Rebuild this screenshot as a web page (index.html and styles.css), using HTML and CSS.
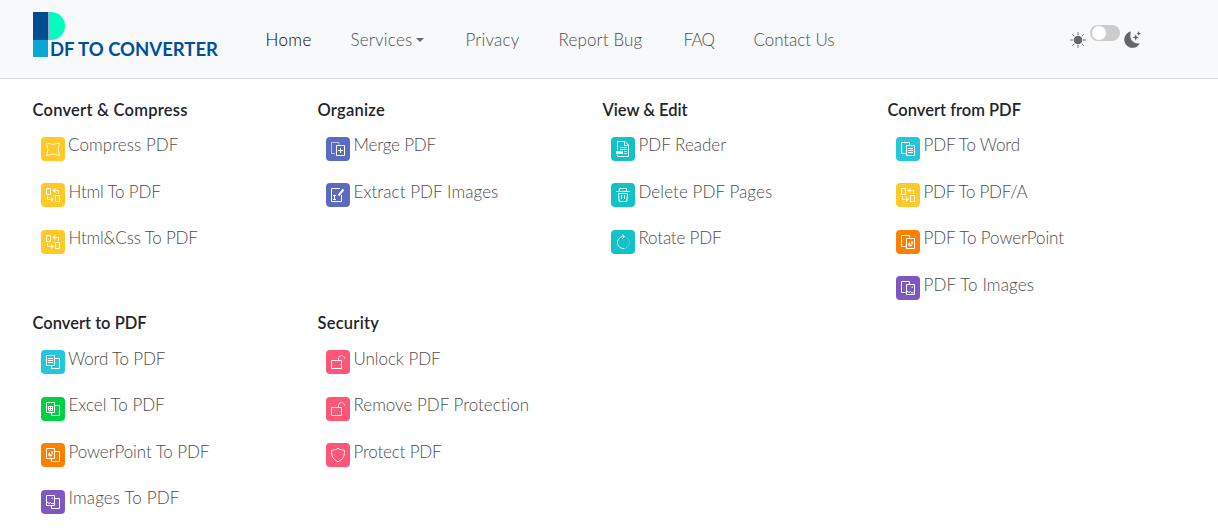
FILE: index.html
```html
<!DOCTYPE html>
<html lang="en">
<head>
<meta charset="utf-8">
<title>PDF To Converter</title>
<link rel="stylesheet" href="styles.css">
</head>
<body>
<svg class="sprite" aria-hidden="true">
  <symbol id="compress" viewBox="0 0 24 24"><path opacity=".85" d="M5.500 6Q12 8.800 18.500 6Q15.600 12.200 18.500 18.500Q12 15.600 5.500 18.500Q8.400 12.200 5.500 6Z"/></symbol>
  <symbol id="swap" viewBox="0 0 24 24"><path d="M5.500 5.500h4v6h-4zM14.500 12.500h4v6h-4z"/><path opacity=".8" d="M13 7.500h4.500V11M6.500 13v3.500H11"/><path class="solid" opacity=".9" d="M11.300 7.500l3-2.500v5zM13 16.500l-3-2.500v5z"/></symbol>
  <symbol id="merge" viewBox="0 0 24 24"><path opacity=".6" d="M9 16.500H5.500V5.500h7.500V7.500"/><path d="M10.500 8.500h8v10h-8zM14.500 11v5M12 13.500h5"/></symbol>
  <symbol id="extract" viewBox="0 0 24 24"><path d="M14 5.500H5.500v13h10V12M7 12.500h3M7 16.500h3M8.500 12.500v4"/><path class="thick" d="M12.500 12.500l5-6"/></symbol>
  <symbol id="reader" viewBox="0 0 24 24"><path d="M6.500 13V4.500h7.500l3.500 3.500v11.500h-11V18M13.500 5v3.500H17M9 10.500h6.500M9 12.500h6.500M13 14.500h3M13 16.500h3"/><path class="solid" d="M5 14h7v3H5z"/></symbol>
  <symbol id="trash" viewBox="0 0 24 24"><path d="M5 8.500h14M8.500 8V5.500h7V8M7.500 10.500l.7 8h7.600l.7-8zM10.500 12v4M13.500 12v4"/></symbol>
  <symbol id="rotate" viewBox="0 0 24 24"><path opacity=".8" d="M13.500 6.500H11.500a6 6 0 1 0 2 12M11 4.500l2.500 2-2.500 2.500"/><path class="dots" d="M15 18A6 6 0 0 0 15.500 7.500"/></symbol>
  <symbol id="pages-r" viewBox="0 0 24 24"><path d="M10 16.500H5.500v-11h8V8M10.500 8.500h8v10h-8z"/></symbol>
  <symbol id="pages-l" viewBox="0 0 24 24"><path d="M5.500 5.500h8v10h-8zM14 8.500h4.500v10h-8V16"/></symbol>
  <symbol id="lines" viewBox="0 0 24 24"><path d="M7 8.500h5M7 10.500h5M7 12.500h5"/></symbol>
  <symbol id="cells" viewBox="0 0 24 24"><path d="M7.500 9.500h4v4h-4zM9.500 9.500v4M7.500 11.500h4"/></symbol>
  <symbol id="pie" viewBox="0 0 24 24"><path class="solid" d="M9 9.200v2.300h2.500A2.200 2.200 0 1 1 9 9.200zM10 8.500h2v2h-2z"/></symbol>
  <symbol id="photo" viewBox="0 0 24 24"><path d="M6 12l2 1.500 1.500-1 1.500 1.500 2-1"/><path opacity=".7" class="solid" d="M10.500 7.500h1.500V9h-1.500z"/></symbol>
  <symbol id="unlock" viewBox="0 0 24 24"><path d="M5.500 10.500h10v8h-10z"/><path opacity=".75" d="M12.500 10V8.500a3 3 0 0 1 6 0V9"/></symbol>
  <symbol id="shield" viewBox="0 0 24 24"><path opacity=".9" d="M12 5.300C10 6.800 8 7 5.600 7.300C5.200 13 7 16.500 12 18.700C17 16.500 18.800 13 18.400 7.300C16 7 14 6.800 12 5.300Z"/></symbol>
</svg>

<header class="navbar">
  <a class="brand" href="#">
    <svg width="186" height="48" viewBox="0 0 186 48" role="img">
      <path fill="#004d92" d="M1 0h15v28H1z"/>
      <path fill="#08a7d8" d="M1 28h15v17H1z"/>
      <path fill="#00ffbf" d="M17 0h2a14 14 0 0 1 0 28H17z"/>
      <path fill="#017" opacity=".35" d="M16 0h1v28h-1z"/>
      <text class="brand-text" x="18" y="44" textLength="168" lengthAdjust="spacingAndGlyphs">DF TO CONVERTER</text>
    </svg>
  </a>
  <nav class="menu">
    <a class="active home" href="#">Home</a>
    <a class="services" href="#">Services<i class="caret"></i></a>
    <a class="privacy" href="#">Privacy</a>
    <a class="bug" href="#">Report Bug</a>
    <a class="faq" href="#">FAQ</a>
    <a class="tight" href="#">Contact Us</a>
  </nav>
  <div class="theme">
    <svg class="sun" width="16" height="16" viewBox="0 0 16 16"><circle cx="8" cy="8" r="4.300"/><path d="M8 0v3M8 13v3M0 8h3M13 8h3M2.300 2.300l2 2M11.700 11.700l2 2M2.300 13.700l2-2M11.700 4.300l2-2"/></svg>
    <span class="switch"></span>
    <svg class="moon" width="17" height="17" viewBox="0 0 17 17"><path d="M7 .6C4.600 7.500 8.500 13.300 15.800 12.300A8.200 8.200 0 1 1 7 .6Z"/><path d="M11.700 3.200l.9 2.300 2.200.9-2.200.9-.9 2.400-.9-2.400-2.200-.9 2.200-.9zM14.700.3l.7 1.500 1.500.7-1.500.7-.7 1.500-.7-1.500-1.500-.7 1.500-.7z"/></svg>
  </div>
</header>

<main class="groups">
  <section>
    <h2 class="wide">Convert &amp; Compress</h2>
    <ul>
      <li><svg class="icon yellow"><use href="#compress"/></svg><a class="loose round">Compress PDF</a></li>
      <li><svg class="icon yellow"><use href="#swap"/></svg><a class="tighter">Html To PDF</a></li>
      <li><svg class="icon yellow"><use href="#swap"/></svg><a class="tighter">Html&amp;Css To PDF</a></li>
    </ul>
  </section>
  <section>
    <h2 class="wide">Organize</h2>
    <ul>
      <li><svg class="icon indigo"><use href="#merge"/></svg><a class="tighter">Merge PDF</a></li>
      <li><svg class="icon indigo"><use href="#extract"/></svg><a class="loose">Extract PDF Images</a></li>
    </ul>
  </section>
  <section>
    <h2 class="normal">View &amp; Edit</h2>
    <ul>
      <li><svg class="icon teal"><use href="#reader"/></svg><a>PDF Reader</a></li>
      <li><svg class="icon teal"><use href="#trash"/></svg><a class="loose">Delete PDF Pages</a></li>
      <li><svg class="icon teal"><use href="#rotate"/></svg><a class="tighter">Rotate PDF</a></li>
    </ul>
  </section>
  <section>
    <h2>Convert from PDF</h2>
    <ul>
      <li><svg class="icon cyan"><use href="#pages-r"/><use href="#lines" x="5" y="3"/></svg><a class="tighter">PDF To Word</a></li>
      <li><svg class="icon yellow"><use href="#swap"/></svg><a class="tightest">PDF To PDF/A</a></li>
      <li><svg class="icon orange"><use href="#pages-r"/><use href="#pie" x="5" y="3"/></svg><a class="tight">PDF To PowerPoint</a></li>
      <li><svg class="icon purple"><use href="#pages-r"/><use href="#photo" x="5" y="3"/></svg><a class="looser">PDF To Images</a></li>
    </ul>
  </section>
  <section>
    <h2>Convert to PDF</h2>
    <ul>
      <li><svg class="icon cyan"><use href="#pages-l"/><use href="#lines"/></svg><a class="tighter round">Word To PDF</a></li>
      <li><svg class="icon green"><use href="#pages-l"/><use href="#cells"/></svg><a>Excel To PDF</a></li>
      <li><svg class="icon orange"><use href="#pages-l"/><use href="#pie"/></svg><a class="tight">PowerPoint To PDF</a></li>
      <li><svg class="icon purple"><use href="#pages-l"/><use href="#photo"/></svg><a class="looser">Images To PDF</a></li>
    </ul>
  </section>
  <section>
    <h2 class="wide">Security</h2>
    <ul>
      <li><svg class="icon pink"><use href="#unlock"/></svg><a class="tight">Unlock PDF</a></li>
      <li><svg class="icon pink"><use href="#unlock"/></svg><a>Remove PDF Protection</a></li>
      <li><svg class="icon pink"><use href="#shield"/></svg><a class="tighter">Protect PDF</a></li>
    </ul>
  </section>
</main>
</body>
</html>
```
FILE: styles.css
```css
* { box-sizing: border-box; }
body {
  margin: 0;
  height: 532px;
  overflow: hidden;
  background: #fff;
  color: #212529;
  font: 300 17px/24px Lato, "Liberation Sans", sans-serif;
  font-variant-ligatures: none;
}
a { color: inherit; text-decoration: none; white-space: nowrap; }
.sprite { display: none; }

.navbar {
  display: flex;
  height: 79px;
  padding: 12px 77px 0 32px;
  background: #f8f9fb;
  border-bottom: 1px solid #d5d7da;
}
.brand { display: block; width: 186px; height: 48px; }
.brand svg { display: block; overflow: visible; }
.brand-text { font: 700 18px Lato, sans-serif; fill: #004f98; }

.menu { display: flex; margin: 16px auto 0 47.500px; color: #4c4e50; }
.menu a { flex: none; }
.menu .active { color: #000; }
.home { width: 85px; letter-spacing: .4px; }
.services { width: 115px; letter-spacing: .23px; }
.privacy { width: 93px; letter-spacing: .2px; }
.bug { width: 125px; letter-spacing: .14px; }
.faq { width: 70px; letter-spacing: -.7px; }
.caret {
  display: inline-block;
  margin-left: 3.500px;
  vertical-align: 4px;
  border: 4.500px solid transparent;
  border-top-color: #666;
  border-bottom: 0;
}

.theme { display: flex; gap: 4px; }
.sun { margin: 20px 0 0; fill: #666; stroke: #777; }
.sun circle { stroke: none; }
.switch {
  width: 30px;
  height: 16px;
  margin-top: 13px;
  padding: 1px 2px;
  border-radius: 8px;
  background: #ccc;
}
.switch::before { content: ""; display: block; width: 14px; height: 14px; border-radius: 50%; background: #fff; }
.moon { margin-top: 19px; fill: #666; }

.groups {
  display: grid;
  grid-template-columns: repeat(4, 285px);
  grid-template-rows: 213.300px 213px;
  padding: 19px 0 0 32px;
}
h2 { margin: 0; padding-left: .5px; font-size: 16.500px; line-height: 24px; font-weight: 600; letter-spacing: 0; }
h2.wide { letter-spacing: .24px; }
h2.normal { letter-spacing: -.05px; }
ul {
  display: grid;
  grid-auto-rows: 46.500px;
  margin: 0;
  padding: 10.800px 0 0 9px;
  list-style: none;
  color: #4c4c4c;
}
li { display: flex; }
li a { padding: .5px 0 0 3.500px; }
li a.round { padding-left: 3px; }
.icon {
  flex: none;
  width: 24px;
  height: 24px;
  margin-top: 4px;
  border-radius: 4px;
  fill: none;
  stroke: #fff;
}
.solid { fill: #fff; stroke: none; }
.thick { stroke-width: 2; }
.dots { stroke-dasharray: 1 1.500; opacity: .6; }
.yellow { background: #ffca28; }
.indigo { background: #5c6bc0; }
.teal { background: #12c2c6; }
.cyan { background: #26c6da; }
.orange { background: #ff8000; }
.purple { background: #7e57c2; }
.green { background: #00d044; }
.pink { background: #ff5677; }

.looser { letter-spacing: .14px; }
.loose { letter-spacing: .07px; }
.tight { letter-spacing: -.08px; }
.tighter { letter-spacing: -.18px; }
.tightest { letter-spacing: -.28px; }
```
